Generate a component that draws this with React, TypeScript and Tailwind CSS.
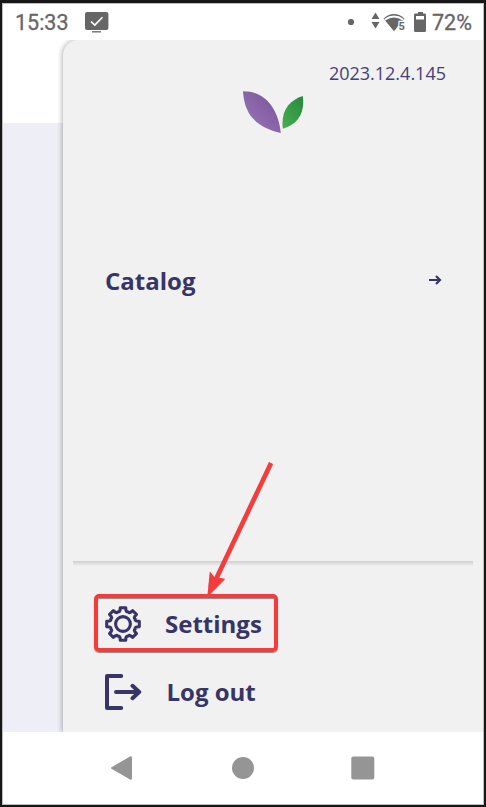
import React from "react";

const GEAR_TEETH = 8;

// Closed outline of the cog: each tooth has a flat crown, short flanks and a rounded valley beside it.
function gearOutline(): string {
  const points: string[] = [];
  const step = (Math.PI * 2) / GEAR_TEETH;
  const profile = [
    [-0.21, 16.5],
    [0.21, 16.5],
    [0.27, 14],
    [0.38, 12.8],
    [0.5, 13.2],
    [0.62, 12.8],
    [0.73, 14],
  ];
  for (let i = 0; i < GEAR_TEETH; i++) {
    for (const [offset, radius] of profile) {
      const a = (i + offset) * step - Math.PI / 2;
      points.push(`${(18 + Math.cos(a) * radius).toFixed(2)} ${(18 + Math.sin(a) * radius).toFixed(2)}`);
    }
  }
  return `M${points.join("L")}Z`;
}

function StatusBar() {
  return (
    <header className="flex h-9 shrink-0 items-center bg-white pl-3 pr-[11px] font-[Roboto,sans-serif] text-[21.5px] leading-9 text-[#666] [-webkit-text-stroke:0.3px_#666]">
      <span className="mt-0.5 w-[70px] whitespace-nowrap">15:33</span>
      <svg width="24" height="22" viewBox="0 0 24 22" className="mt-0.5">
        <rect x="0" y="0" width="23.4" height="18" rx="2" fill="#666" />
        <path d="M6 9.5l3.8 3.6L17.5 5.2" fill="none" stroke="#fff" strokeWidth="1.6" />
        <path d="M7 19.8h9" stroke="#777" strokeWidth="1.5" />
      </svg>
      <svg width="84" height="24" viewBox="344 9 84 24" className="ml-auto">
        <g fill="#666">
          <circle cx="351" cy="21" r="3.1" />
          <path d="M375.5 11.5l4 6.6h-8zM375.5 27.5l4-6.6h-8z" />
          <path d="M383.5 17.4Q394 8.6 404.5 17.4L394 30.3Z" />
          <path d="M384.8 18.8Q394 12.4 403.2 18.8" fill="none" stroke="#fff" strokeWidth="2" />
          <rect x="418" y="11" width="5" height="3" />
          <rect x="414" y="12.5" width="12" height="18.5" rx="1.2" />
          <rect x="416" y="15" width="8" height="3.5" fill="#fff" />
        </g>
        <text x="398.4" y="28.6" fill="#666" stroke="#fff" strokeWidth="2.5" paintOrder="stroke" fontSize="11" fontWeight="700" fontFamily="Roboto, sans-serif">5</text>
      </svg>
      <span className="ml-1 mt-0.5 w-10 whitespace-nowrap">72%</span>
    </header>
  );
}

function Logo() {
  return (
    <svg width="62" height="44" viewBox="242 90 62 44" className="ml-[179px] mt-[5px]">
      <defs>
        <linearGradient id="purpleLeaf" x1="1" y1="0" x2="0" y2="1">
          <stop stopColor="#765096" />
          <stop offset="1" stopColor="#9c7aba" />
        </linearGradient>
        <linearGradient id="greenLeaf" x1="1" y1="0" x2="0" y2="1">
          <stop stopColor="#25893b" />
          <stop offset="1" stopColor="#4aae52" />
        </linearGradient>
      </defs>
      <path d="M243 91.2C265 91 278 108 280.8 133C257 127 244.5 116 243 91.2Z" fill="url(#purpleLeaf)" />
      <path d="M302.8 96C290 100 280.5 110 282.8 128.8C298 124 305 113 302.8 96Z" fill="url(#greenLeaf)" />
    </svg>
  );
}

function SettingsIcon() {
  return (
    <svg width="36" height="36" viewBox="0 0 36 36" fill="none" stroke="#373567" strokeLinejoin="round">
      <path d={gearOutline()} strokeWidth="3.1" />
      <circle cx="18" cy="18" r="7.4" strokeWidth="3.1" />
    </svg>
  );
}

function LogoutIcon() {
  return (
    <svg width="37" height="36" viewBox="0 0 37 36" fill="none" stroke="#373567" strokeLinecap="round" strokeLinejoin="round">
      <path d="M16.2 2H2v32h14.2" strokeWidth="4" />
      <path d="M11 18h23M27.5 11.8L34.2 18l-6.7 6.2" strokeWidth="4" />
    </svg>
  );
}

function Drawer() {
  return (
    <aside className="flex w-[420px] shrink-0 flex-col rounded-tl-[15px] bg-[#f1f1f1] shadow-[-1px_0_5px_rgba(0,0,0,0.3)]">
      <div className="mr-[37px] mt-[21px] h-6 text-right text-[18px] leading-6 text-[#444078]">2023.12.4.145</div>
      <Logo />
      <div className="mt-[129px] flex h-9 items-center justify-between pl-[42px] pr-[41px]">
        <span className="text-2xl leading-9 font-bold">Catalog</span>
        <svg width="14" height="12" viewBox="0 0 14 12" fill="none" stroke="#373567" strokeWidth="2.2" className="-mt-0.5">
          <path d="M1 6h11M8 2l4 4-4 4" />
        </svg>
      </div>
      <div className="ml-[10px] mt-[262px] h-[5px] w-[400px] bg-linear-to-b from-[#cecece] to-[#f1f1f1]" />
      <div className="ml-[31px] mt-[28px] flex h-[58px] w-[184px] items-center rounded-[5px] border-4 border-[#f43c3c] pl-[7px] pt-0.5 shadow-[0_1px_1px_#888,inset_0_1px_1px_#888]">
        <SettingsIcon />
        <span className="ml-6 text-2xl leading-9 font-bold">Settings</span>
      </div>
      <div className="ml-[42px] mt-[22px] flex h-9 items-center">
        <LogoutIcon />
        <span className="ml-[24.5px] text-2xl leading-9 font-bold">Log out</span>
      </div>
    </aside>
  );
}

function NavigationBar() {
  return (
    <nav className="flex h-[72px] shrink-0 items-center bg-white">
      <svg width="22" height="24" viewBox="0 0 22 24" className="ml-[108px]" fill="#959595">
        <path d="M.5 11.2L19.5.3Q21 0 21 1.500V22.500Q21 24 19.500 23.700L.5 12.8Q-.5 12 .5 11.2Z" />
      </svg>
      <div className="ml-[99px] size-[22px] rounded-full bg-[#959595]" />
      <svg width="24" height="24" viewBox="0 0 24 24" className="ml-[97px]">
        <rect x="0.3" y="0.5" width="23" height="23" rx="2" fill="#959595" />
      </svg>
    </nav>
  );
}

export default function App() {
  return (
    <div className="relative flex h-[807px] w-[486px] flex-col overflow-hidden border-x-2 border-y-2 border-t-3 border-[#171718] bg-white font-['Open_Sans',sans-serif] text-[#373567]">
      <div className="flex flex-1 flex-col border border-[#bdbdbf]">
        <StatusBar />
        <main className="flex h-[692px] shrink-0 overflow-hidden">
          <div className="w-[60px] shrink-0 pt-[83px]">
            <div className="h-[609px] w-[76px] bg-[#eeeff6]" />
          </div>
          <Drawer />
        </main>
        <NavigationBar />
      </div>
      <svg className="pointer-events-none absolute -left-0.5 -top-[3px]" width="486" height="807" viewBox="0 0 486 807">
        <g style={{ filter: "drop-shadow(0 1px 0.5px #8888)" }}>
          <path d="M271 463L216 579" stroke="#f43c3c" strokeWidth="4.5" />
          <path d="M207.3 597L209.8 571.5L214.5 577L225.2 578.8Z" fill="#f43c3c" />
        </g>
      </svg>
    </div>
  );
}
